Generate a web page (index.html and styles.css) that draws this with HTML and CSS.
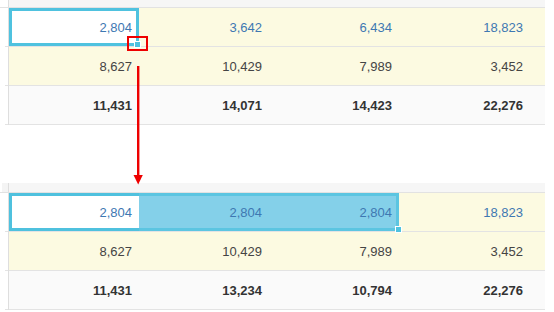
FILE: index.html
```html
<!DOCTYPE html>
<html>
<head>
<meta charset="utf-8">
<link rel="stylesheet" href="styles.css">
</head>
<body>
<div class="page">
  <div class="sheet">
    <div class="hdr hdr-a"><div class="gut"></div><div class="hfill"></div></div>
    <div class="row">
      <div class="gut"></div>
      <div class="cell active blue">2,804<span class="handle"></span></div>
      <div class="cell yel blue">3,642</div>
      <div class="cell yel blue">6,434</div>
      <div class="cell yel blue last">18,823</div>
    </div>
    <div class="row">
      <div class="gut"></div>
      <div class="cell yel">8,627</div>
      <div class="cell yel">10,429</div>
      <div class="cell yel">7,989</div>
      <div class="cell yel last">3,452</div>
    </div>
    <div class="row total">
      <div class="gut"></div>
      <div class="cell">11,431</div>
      <div class="cell">14,071</div>
      <div class="cell">14,423</div>
      <div class="cell last">22,276</div>
    </div>
  </div>

  <div class="sheet sheet-b">
    <div class="hdr hdr-b"><div class="gut"></div><div class="hfill"></div></div>
    <div class="row">
      <div class="gut"></div>
      <div class="cell blue sel-start">2,804</div>
      <div class="cell blue sel-mid">2,804</div>
      <div class="cell blue sel-end">2,804<span class="handle"></span></div>
      <div class="cell yel blue last">18,823</div>
    </div>
    <div class="row">
      <div class="gut"></div>
      <div class="cell yel">8,627</div>
      <div class="cell yel">10,429</div>
      <div class="cell yel">7,989</div>
      <div class="cell yel last">3,452</div>
    </div>
    <div class="row total">
      <div class="gut"></div>
      <div class="cell">11,431</div>
      <div class="cell">13,234</div>
      <div class="cell">10,794</div>
      <div class="cell last">22,276</div>
    </div>
  </div>

  <div class="marker"></div>
  <svg class="arrow" width="554" height="312" viewBox="0 0 554 312">
    <rect x="137" y="66" width="2.4" height="110" fill="#ee0000"/>
    <polygon points="133.5,175 142.8,175 138.2,184.5" fill="#ee0000"/>
  </svg>
</div>
</body>
</html>
```

FILE: styles.css
```css
html, body {
  margin: 0;
  padding: 0;
  background: #ffffff;
}

.page {
  position: relative;
  width: 554px;
  height: 312px;
  overflow: hidden;
  font-family: "Liberation Sans", Arial, sans-serif;
  font-size: 13px;
  color: #444444;
}

.sheet {
  width: 545px;
}

.sheet-b {
  margin-top: 58px;
}

.hdr {
  display: flex;
  border-bottom: 1px solid #e2e2e2;
}

.hdr-a { height: 7px; }
.hdr-b { height: 9px; }

.hdr .gut {
  width: 8px;
  border-right: 1px solid #dedede;
  background: #ffffff;
}

.hdr-b .gut {
  background: linear-gradient(to right, #ffffff 2px, #f4f4f4 2px);
}

.hfill {
  flex: 1;
  background: #f6f6f6;
}

.row {
  display: flex;
  height: 39px;
}

.row .gut {
  width: 8px;
  border-right: 1px solid #dedede;
  background: linear-gradient(to right, #ffffff 5px, #e3e3e3 5px) bottom / 100% 1px no-repeat, #ffffff;
}

.cell {
  position: relative;
  width: 130px;
  box-sizing: border-box;
  height: 39px;
  padding-right: 7px;
  padding-top: 1px;
  display: flex;
  align-items: center;
  justify-content: flex-end;
  border-bottom: 1px solid #e3e3e3;
  background: #ffffff;
}

.cell.last {
  width: 146px;
  padding-right: 22px;
}

.yel {
  background: #fcfae1;
}

.blue {
  color: #3e78b2;
}

.total .cell {
  background: #fafafa;
  font-weight: bold;
  color: #333333;
}

.active {
  background: #ffffff;
  box-shadow: inset 0 0 0 3px #4fc2df;
}

.sel-start {
  background: #ffffff;
  box-shadow: inset 3px 0 0 #4fc1de, inset 0 3px 0 #4fc1de, inset 0 -3px 0 #4fc1de;
}

.sel-mid {
  background: #84d0e9;
  box-shadow: inset 0 3px 0 #5cc5e1, inset 0 -3px 0 #5cc5e1;
}

.sel-end {
  background: #84d0e9;
  box-shadow: inset -3px 0 0 #5cc5e1, inset 0 3px 0 #5cc5e1, inset 0 -3px 0 #5cc5e1;
}

.handle {
  position: absolute;
  right: -2px;
  bottom: -2px;
  width: 5px;
  height: 5px;
  background: #4fc2df;
  border: 1px solid #ffffff;
  z-index: 2;
}

.sel-end .handle {
  right: -3px;
}

.marker {
  position: absolute;
  left: 127px;
  top: 36px;
  width: 21px;
  height: 15px;
  box-sizing: border-box;
  border: 2px solid #ee0000;
  z-index: 3;
}

.arrow {
  position: absolute;
  left: 0;
  top: 0;
  pointer-events: none;
  z-index: 3;
}
```
